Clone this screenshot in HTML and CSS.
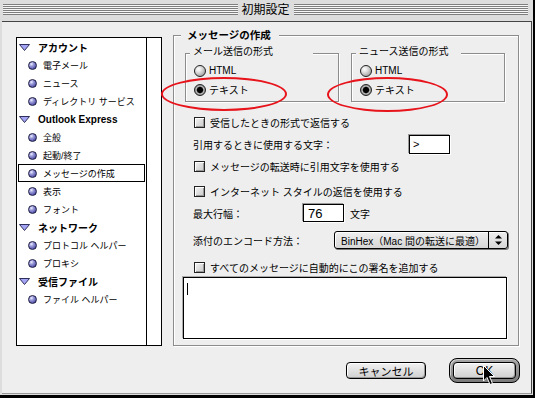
FILE: index.html
```html
<!DOCTYPE html>
<html lang="ja">
<head>
    <meta charset="UTF-8">
    <title>初期設定</title>
    <link rel="stylesheet" href="styles.css">
</head>
<body>

    <div class="window">

        <!-- Title bar -->
        <div class="titlebar">
            <span class="stripes"></span>
            <span class="title">初期設定</span>
            <span class="stripes"></span>
        </div>

        <div class="content">
            <div class="panes">

                <!-- Category list -->
                <div class="category-list">
                    <ul class="items">
                        <li class="group-head"><svg class="twisty" width="11" height="7" viewBox="0 0 11 7"><polygon points="0.5,0.5 10.5,0.5 5.5,6.5" fill="#a4a4f4" stroke="#2e2e5c"/></svg>アカウント</li>
                        <li class="item"><span class="bullet"></span>電子メール</li>
                        <li class="item"><span class="bullet"></span>ニュース</li>
                        <li class="item"><span class="bullet"></span>ディレクトリ サービス</li>
                        <li class="group-head"><svg class="twisty" width="11" height="7" viewBox="0 0 11 7"><polygon points="0.5,0.5 10.5,0.5 5.5,6.5" fill="#a4a4f4" stroke="#2e2e5c"/></svg>Outlook Express</li>
                        <li class="item"><span class="bullet"></span>全般</li>
                        <li class="item"><span class="bullet"></span>起動/終了</li>
                        <li class="item selected"><span class="bullet"></span>メッセージの作成</li>
                        <li class="item"><span class="bullet"></span>表示</li>
                        <li class="item"><span class="bullet"></span>フォント</li>
                        <li class="group-head"><svg class="twisty" width="11" height="7" viewBox="0 0 11 7"><polygon points="0.5,0.5 10.5,0.5 5.5,6.5" fill="#a4a4f4" stroke="#2e2e5c"/></svg>ネットワーク</li>
                        <li class="item"><span class="bullet"></span>プロトコル ヘルパー</li>
                        <li class="item"><span class="bullet"></span>プロキシ</li>
                        <li class="group-head"><svg class="twisty" width="11" height="7" viewBox="0 0 11 7"><polygon points="0.5,0.5 10.5,0.5 5.5,6.5" fill="#a4a4f4" stroke="#2e2e5c"/></svg>受信ファイル</li>
                        <li class="item"><span class="bullet"></span>ファイル ヘルパー</li>
                    </ul>
                    <div class="scroll-track"></div>
                </div>

                <!-- Compose settings -->
                <div class="group">
                    <span class="group-title">メッセージの作成</span>

                    <div class="formats">
                        <div class="sub-box">
                            <span class="sub-title mail">メール送信の形式</span>
                            <div class="radio-row"><span class="radio"></span>HTML</div>
                            <div class="radio-row"><span class="radio on"></span>テキスト</div>
                        </div>
                        <div class="sub-box">
                            <span class="sub-title">ニュース送信の形式</span>
                            <div class="radio-row"><span class="radio"></span>HTML</div>
                            <div class="radio-row"><span class="radio on"></span>テキスト</div>
                        </div>
                    </div>

                    <div class="row first"><span class="check"></span>受信したときの形式で返信する</div>
                    <div class="row"><span class="quote-label">引用するときに使用する文字：</span><span class="field quote">&gt;</span></div>
                    <div class="row"><span class="check"></span>メッセージの転送時に引用文字を使用する</div>
                    <div class="row gap"><span class="check"></span>インターネット スタイルの返信を使用する</div>
                    <div class="row"><span class="width-label">最大行幅：</span><span class="field wrap">76</span><span class="unit">文字</span></div>
                    <div class="row gap-lg">
                        <span class="encode-label">添付のエンコード方法：</span>
                        <div class="popup">
                            <span class="popup-text">BinHex（Mac 間の転送に最適）</span>
                            <span class="popup-arrows">
                                <svg width="7" height="10" viewBox="0 0 7 10"><polygon points="3.5,0 7,3.5 0,3.5" fill="#000"/><polygon points="0,6.5 7,6.5 3.5,10" fill="#000"/></svg>
                            </span>
                        </div>
                    </div>
                    <div class="row gap-lg"><span class="check"></span>すべてのメッセージに自動的にこの署名を追加する</div>
                    <div class="signature"><span class="caret"></span></div>
                </div>
            </div>

            <!-- Dialog buttons -->
            <div class="buttons">
                <div class="btn cancel">キャンセル</div>
                <div class="default-ring"><div class="btn ok">OK</div></div>
            </div>
        </div>

        <!-- Red annotation marks and mouse pointer -->
        <div class="mark mark-mail"></div>
        <div class="mark mark-news"></div>
        <svg class="pointer" width="14" height="22" viewBox="0 0 14 22">
            <path d="M1.5,1.5 V17 L5,13.5 L8,20.5 L10.5,19.5 L7.5,12.5 L12.5,12.5 Z" fill="#000" stroke="#fff" stroke-width="1"/>
        </svg>
    </div>

</body>
</html>
```

FILE: styles.css
```css
* {
    margin: 0;
    padding: 0;
    box-sizing: border-box;
}
body {
    width: 535px;
    height: 398px;
    overflow: hidden;
    background: #000;
    color: #000;
    font-family: "Liberation Sans", "Noto Sans CJK JP", sans-serif;
    font-size: 10px;
}
.window {
    position: relative;
    width: 533px;
    height: 395px;
    background: #dddddd;
    display: flex;
    flex-direction: column;
}

/* title bar */
.titlebar {
    height: 21px;
    display: flex;
    align-items: flex-start;
    padding: 4px 5px 0 3px;
}
.stripes {
    flex: 1;
    height: 11px;
    background: repeating-linear-gradient(#7e7e7e 0 1px, #f6f6f6 1px 2px);
}
.title {
    padding: 0 4px;
    margin-top: -1px;
    font-size: 12px;
    line-height: 14px;
}

.content {
    flex: 1;
    margin: 0 1px 1px 2px;
    padding: 13px 11px 0 14px;
    background: #eeeeee;
    border-top: 1px solid #444;
    border-right: 1px solid #444;
    border-bottom: 1px solid #999;
}
.panes {
    display: grid;
    grid-template-columns: 146px 346px;
    column-gap: 11px;
    align-items: start;
}

/* left list */
.category-list {
    margin-top: 2px;
    height: 309px;
    display: flex;
    background: #fff;
    border: 1px solid #000;
}
.items {
    flex: 1;
    list-style: none;
}
.scroll-track {
    width: 15px;
    border-left: 1px solid #000;
}
.items li {
    height: 18px;
    margin: 0 1px;
    border: 1px solid transparent;
    display: flex;
    align-items: center;
    white-space: nowrap;
}
.group-head {
    font-weight: bold;
}
.twisty {
    margin-right: 8px;
}
.item {
    padding-left: 9px;
    font-size: 9px;
}
.item.selected {
    border-color: #000 !important;
}
.bullet {
    width: 9px;
    height: 9px;
    margin-right: 6px;
    border-radius: 50%;
    border: 1px solid #1c1c44;
    background: radial-gradient(circle at 35% 30%, #f0f0ff 0, #a0a0dc 30%, #5a5ab0 70%, #34346c 100%);
}

/* group boxes */
.group {
    height: 311px;
    padding: 0 13px 6px 11px;
    border: 1px solid #8c8c8c;
    box-shadow: inset 1px 1px 0 #fff, 1px 1px 0 #fff;
    display: flex;
    flex-direction: column;
    align-items: flex-start;
}
.group-title {
    margin: -10px 0 0 -4px;
    padding: 0 8px 0 6px;
    background: #eeeeee;
    font-weight: bold;
    font-size: 10.5px;
    line-height: 18px;
}
.formats {
    display: flex;
    gap: 12px;
    margin: 9px 0 10px;
}
.sub-box {
    width: 154px;
    padding: 0 0 2px 8px;
    border: 1px solid #8c8c8c;
    box-shadow: inset 1px 1px 0 #fff, 1px 1px 0 #fff;
    display: flex;
    flex-direction: column;
    align-items: flex-start;
}
.sub-title {
    margin: -11px 0 0 -4px;
    padding: 0 12px 0 3px;
    background: #eeeeee;
    line-height: 18px;
}
.sub-title.mail {
    padding-right: 40px;
}
.radio-row {
    height: 19px;
    display: flex;
    align-items: center;
    gap: 3px;
}
.radio {
    width: 12px;
    height: 12px;
    border-radius: 50%;
    border: 1px solid #222;
    background: radial-gradient(circle at 35% 32%, #fff 0, #e2e2e2 30%, #a8a8a8 75%, #777 100%);
}
.radio.on {
    background: radial-gradient(circle, #000 0 2.6px, #555 3.2px, #bdbdbd 3.8px, #8a8a8a 5px);
}

/* option rows */
.row {
    height: 20px;
    margin: 2px 0 0 8px;
    display: flex;
    align-items: center;
    white-space: nowrap;
}
.row.first {
    margin-top: 0;
}
.row.gap {
    margin-top: 5px;
}
.row.gap-lg {
    margin-top: 7px;
}
.check {
    width: 11px;
    height: 11px;
    margin: 0 5px 0 1px;
    border: 1px solid #222;
    background: linear-gradient(135deg, #f4f4f4, #c8c8c8);
    box-shadow: inset 1px 1px 0 #fff, inset -1px -1px 0 #999;
}
.quote-label {
    width: 216px;
}
.width-label {
    width: 110px;
}
.encode-label {
    width: 141px;
}
.field {
    width: 41px;
    background: #fff;
    border: 1px solid #000;
    box-shadow: -1px -1px 0 #999, 1px 1px 0 #fff;
    display: flex;
    align-items: center;
    font-size: 13px;
}
.field.quote {
    height: 19px;
    padding-left: 3px;
    font-size: 11px;
}
.field.wrap {
    height: 18px;
    padding-left: 4px;
}
.unit {
    margin-left: 6px;
}
.popup {
    width: 174px;
    height: 18px;
    display: flex;
    align-items: center;
    border: 1px solid #000;
    border-radius: 3px;
    background: linear-gradient(#eeeeee, #d6d6d6);
    box-shadow: inset 1px 1px 0 #fff, 1px 1px 0 #777;
}
.popup-text {
    flex: 1;
    padding-left: 6px;
}
.popup-arrows {
    width: 19px;
    height: 100%;
    border-left: 1px solid #000;
    display: flex;
    align-items: center;
    justify-content: center;
}
.signature {
    width: 324px;
    height: 62px;
    margin-left: -2px;
    background: #fff;
    border: 1px solid #000;
    box-shadow: -1px -1px 0 #aaa, 1px 1px 0 #fff;
}
.caret {
    display: block;
    width: 1px;
    height: 12px;
    margin: 5px 0 0 3px;
    background: #000;
}

/* dialog buttons */
.buttons {
    display: flex;
    justify-content: flex-end;
    align-items: center;
    gap: 23px;
    margin-top: 12px;
}
.btn {
    height: 17px;
    border: 1px solid #000;
    border-radius: 4px;
    background: linear-gradient(#f2f2f2, #d0d0d0);
    box-shadow: inset 1px 1px 0 #fff, inset -1px -1px 0 #999;
    display: flex;
    align-items: center;
    justify-content: center;
    font-size: 11px;
}
.cancel {
    width: 80px;
}
.default-ring {
    padding: 3px;
    border: 1px solid #000;
    border-radius: 8px;
    background: linear-gradient(#a8a8a8, #7a7a7a);
    box-shadow: inset 1px 1px 0 #ccc;
}
.ok {
    width: 63px;
    font-size: 12px;
}

/* overlays */
.mark {
    position: absolute;
    border: 2px solid #e8141c;
    border-radius: 50%;
}
.mark-mail {
    left: 161px;
    top: 77px;
    width: 126px;
    height: 34px;
}
.mark-news {
    left: 327px;
    top: 77px;
    width: 121px;
    height: 35px;
}
.pointer {
    position: absolute;
    left: 482px;
    top: 364px;
}
```
